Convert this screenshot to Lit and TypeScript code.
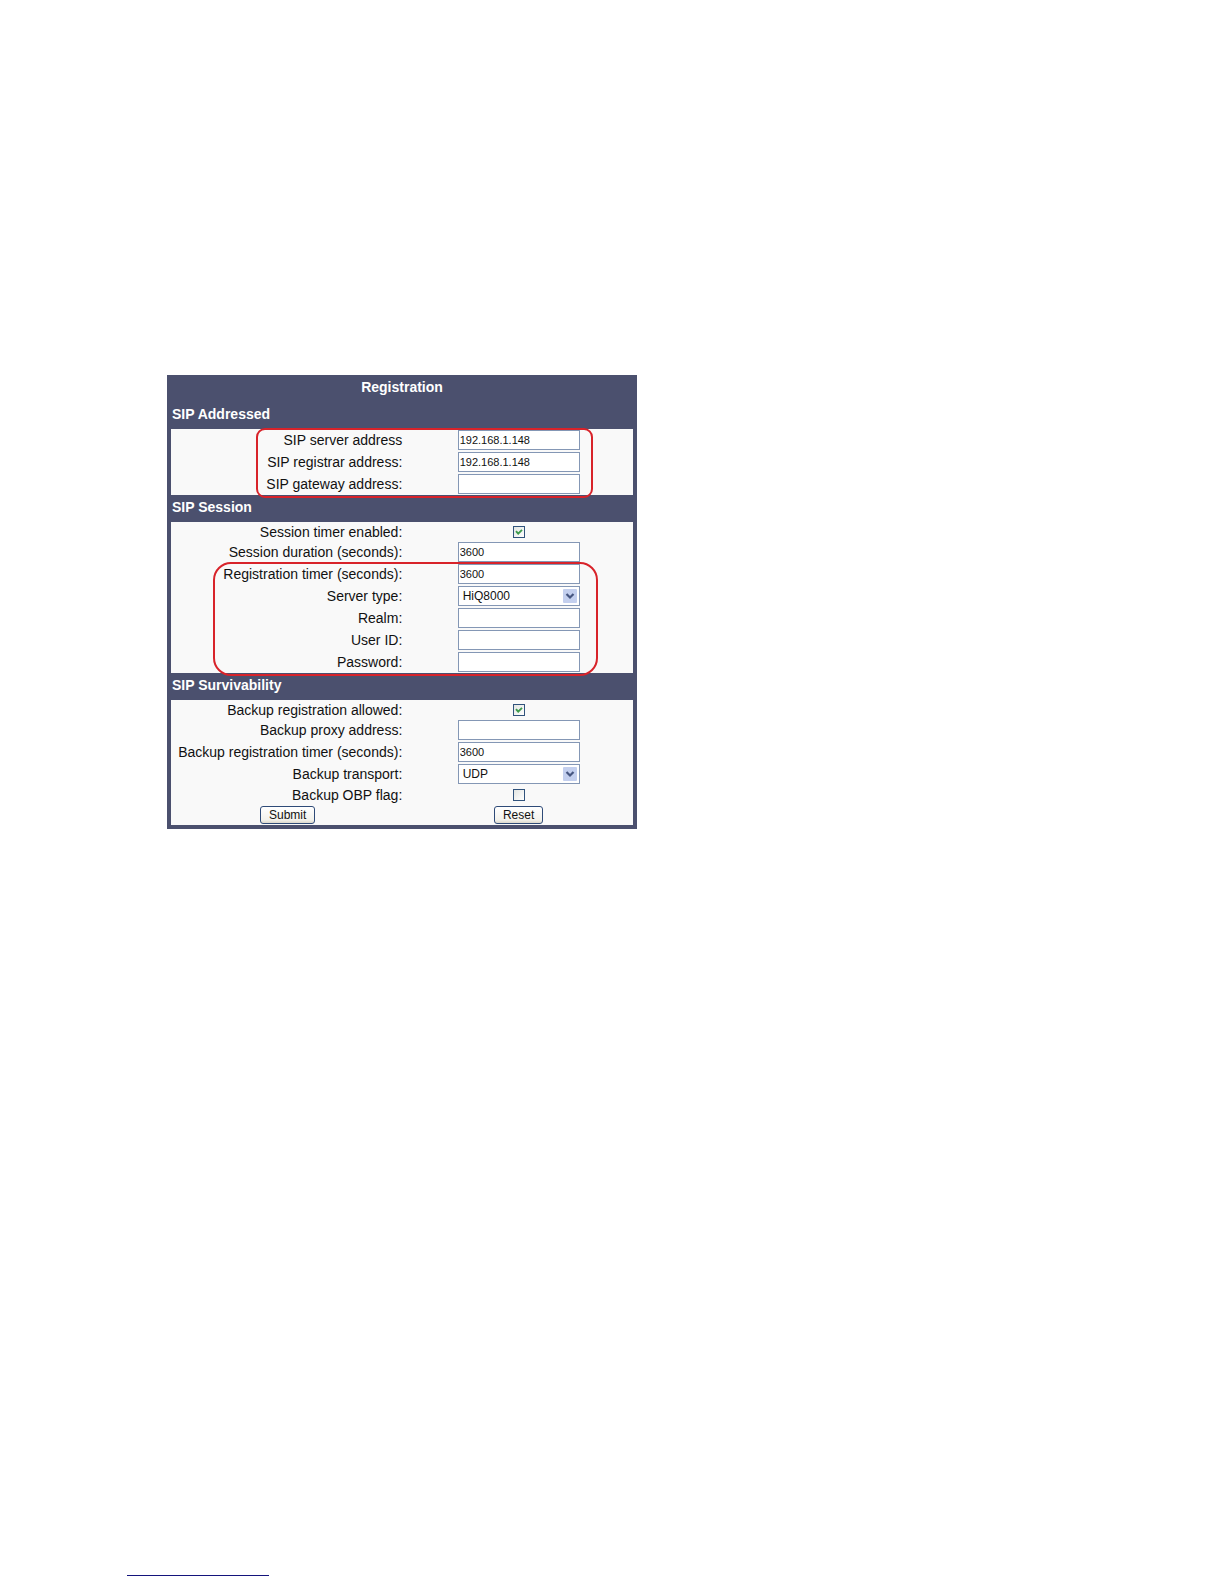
import { LitElement, html, css, svg, nothing } from "lit";
import { customElement } from "lit/decorators.js";

interface Field {
  id: string;
  label: string;
  kind: "text" | "password" | "check" | "select";
  value?: string;
  checked?: boolean;
}

interface Section {
  title: string;
  mark?: string;
  fields: Field[];
}

const SECTIONS: Section[] = [
  {
    title: "SIP Addressed",
    mark: "mark-addresses",
    fields: [
      { id: "server", label: "SIP server address", kind: "text", value: "192.168.1.148" },
      { id: "registrar", label: "SIP registrar address:", kind: "text", value: "192.168.1.148" },
      { id: "gateway", label: "SIP gateway address:", kind: "text" },
    ],
  },
  {
    title: "SIP Session",
    mark: "mark-session",
    fields: [
      { id: "timer", label: "Session timer enabled:", kind: "check", checked: true },
      { id: "duration", label: "Session duration (seconds):", kind: "text", value: "3600" },
      { id: "regtimer", label: "Registration timer (seconds):", kind: "text", value: "3600" },
      { id: "type", label: "Server type:", kind: "select", value: "HiQ8000" },
      { id: "realm", label: "Realm:", kind: "text" },
      { id: "user", label: "User ID:", kind: "text" },
      { id: "password", label: "Password:", kind: "password" },
    ],
  },
  {
    title: "SIP Survivability",
    fields: [
      { id: "backup", label: "Backup registration allowed:", kind: "check", checked: true },
      { id: "proxy", label: "Backup proxy address:", kind: "text" },
      { id: "backuptimer", label: "Backup registration timer (seconds):", kind: "text", value: "3600" },
      { id: "transport", label: "Backup transport:", kind: "select", value: "UDP" },
      { id: "obp", label: "Backup OBP flag:", kind: "check" },
    ],
  },
];

@customElement("app-root")
export class AppRoot extends LitElement {
  static styles = css`
    :host {
      display: flex;
      flex-direction: column;
      box-sizing: border-box;
      min-height: 100vh;
      padding: 375px 127px 8px;
      background: #fff;
      color: #111;
      font-family: "Liberation Sans", Arial, sans-serif;
      font-size: 14px;
    }
    * {
      box-sizing: border-box;
    }
    .panel {
      width: 100%;
      max-width: 470px;
      margin: 0 40px;
      padding: 0 4px 4px;
      background: #4b506e;
    }
    .title,
    .heading {
      margin: 0;
      color: #fff;
      font-size: 14px;
      font-weight: bold;
      line-height: 24px;
      height: 27px;
    }
    .title {
      text-align: center;
    }
    .heading {
      padding-left: 1px;
    }
    .body {
      position: relative;
      background: #f9f9f9;
    }
    .row {
      display: grid;
      grid-template-columns: 51fr 50fr;
      align-items: center;
      height: 22px;
    }
    .row.check {
      height: 19px;
    }
    .label {
      padding-right: 2px;
      text-align: right;
      line-height: 18px;
      white-space: nowrap;
    }
    .control {
      position: relative;
      display: flex;
      align-items: center;
      justify-self: center;
    }
    .box {
      width: 122px;
      height: 20px;
      margin: 0;
      padding: 0 1px 1px;
      border: 1px solid #8497b5;
      border-radius: 0;
      background: #fff;
      color: #111;
      font: 11px "Liberation Sans", Arial, sans-serif;
      outline: none;
    }
    select.box {
      appearance: none;
      padding: 0 20px 0 4px;
      font-size: 12px;
    }
    .arrow {
      position: absolute;
      right: 3px;
      top: 3px;
      width: 14px;
      height: 14px;
      pointer-events: none;
    }
    .tick {
      appearance: none;
      width: 12px;
      height: 12px;
      margin: 0;
      border: 1px solid #31537c;
      background: linear-gradient(135deg, #e2e5e2, #fff);
    }
    .tickmark {
      position: absolute;
      left: 0;
      top: 0;
      width: 12px;
      height: 12px;
      pointer-events: none;
    }
    .actions {
      display: grid;
      grid-template-columns: 51fr 50fr;
      justify-items: center;
      align-items: center;
      height: 21px;
    }
    .button {
      height: 18px;
      padding: 0 8px;
      border: 1px solid #2f4b78;
      border-radius: 3px;
      background: linear-gradient(#fff, #f3f2ec 80%, #dcd8cc);
      color: #111;
      font: 12px "Liberation Sans", Arial, sans-serif;
      line-height: 16px;
    }
    .mark {
      position: absolute;
      z-index: 1;
      border: 2px solid #d8232a;
      pointer-events: none;
    }
    .mark-addresses {
      inset: -1px 40px -3px 85px;
      border-radius: 9px;
    }
    .mark-session {
      inset: 40px 35px -3px 42px;
      border-radius: 18px;
    }
    .footer {
      width: 142px;
      margin-top: auto;
      border-top: 1px solid #14147c;
    }
  `;

  private control(f: Field) {
    if (f.kind === "check") {
      return html`<input class="tick" type="checkbox" id=${f.id} ?checked=${f.checked} />
        ${f.checked
          ? html`<svg class="tickmark" viewBox="0 0 12 12">
              ${svg`<path d="M3 5.2 L5.2 7.6 L9 3.8" fill="none" stroke="#3d9a4c" stroke-width="1.9" />`}
            </svg>`
          : nothing}`;
    }
    if (f.kind === "select") {
      return html`<select class="box" id=${f.id}>
          <option>${f.value}</option>
        </select>
        <svg class="arrow" viewBox="0 0 14 14">
          <rect width="14" height="14" rx="1" fill="#c3cfee" />
          <path d="M3.5 5 L7 8.5 L10.5 5" fill="none" stroke="#465680" stroke-width="2.2" />
        </svg>`;
    }
    return html`<input class="box" type=${f.kind} id=${f.id} .value=${f.value ?? ""} />`;
  }

  render() {
    return html`
      <form class="panel" @submit=${(e: Event) => e.preventDefault()}>
        <h1 class="title">Registration</h1>
        ${SECTIONS.map(
          (s, i) => html`
            <h2 class="heading">${s.title}</h2>
            <div class="body">
              ${s.fields.map(
                (f) => html`<div class="row ${f.kind}">
                  <label class="label" for=${f.id}>${f.label}</label>
                  <div class="control">${this.control(f)}</div>
                </div>`
              )}
              ${i === SECTIONS.length - 1
                ? html`<div class="actions">
                    <button class="button" type="submit">Submit</button>
                    <button class="button" type="reset">Reset</button>
                  </div>`
                : nothing}
              ${s.mark ? html`<div class="mark ${s.mark}"></div>` : nothing}
            </div>
          `
        )}
      </form>
      <div class="footer"></div>
    `;
  }
}
